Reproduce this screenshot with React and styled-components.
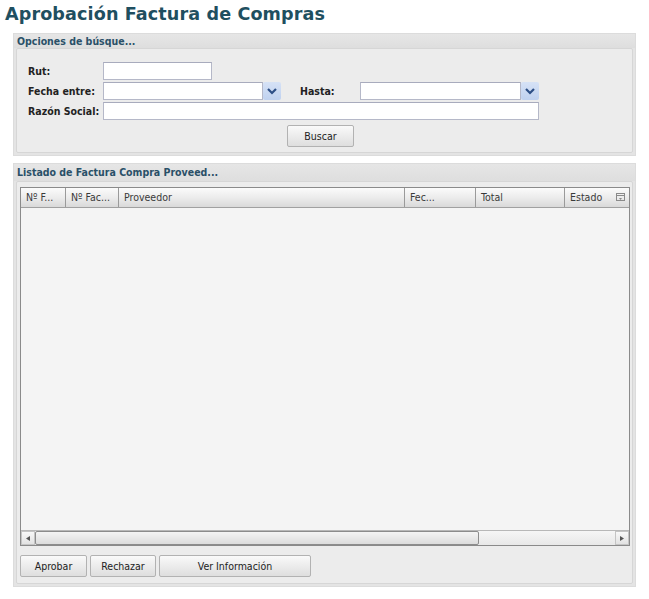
import React from "react";
import styled, { createGlobalStyle } from "styled-components";

const Global = createGlobalStyle`
  html, body { margin: 0; padding: 0; background: #fff; }
  body { font-family: Tahoma, "DejaVu Sans Condensed", "DejaVu Sans", sans-serif; font-size: 11px; color: #222; }
`;

const Page = styled.div`
  width: 649px;
  padding: 4px 0 0 0;
  box-sizing: border-box;
`;

const Title = styled.h1`
  margin: 0 0 9px 5px;
  font-family: "DejaVu Sans", Verdana, sans-serif;
  font-weight: bold;
  font-size: 17.6px;
  line-height: 20px;
  color: #1f4f60;
  letter-spacing: 0.1px;
`;

const Panel = styled.section`
  margin: 0 13px ${(p) => p.$gap || 0}px 13px;
  width: 623px;
  background: #e4e4e4;
  border: 1px solid #dcdcdc;
  box-sizing: border-box;
  height: ${(p) => p.$height}px;
  display: flex;
  flex-direction: column;
`;

const PanelHeader = styled.div`
  height: ${(p) => p.$h || 14}px;
  line-height: ${(p) => p.$h || 14}px;
  padding-left: 3px;
  font-weight: bold;
  font-size: 10.5px;
  color: #2a5068;
  background: linear-gradient(#e6e6e6, #dedede);
`;

const PanelBody = styled.div`
  flex: 1;
  margin: 0 2px 2px 2px;
  background: #ececec;
  border: 1px solid #d6d6d6;
  border-radius: 2px;
  padding: ${(p) => p.$pad};
  display: flex;
  flex-direction: column;
`;

const Form = styled.div`
  display: grid;
  grid-template-columns: 75px auto;
  row-gap: 2px;
  padding-left: 11px;
`;

const Label = styled.label`
  font-weight: bold;
  font-size: 10.5px;
  line-height: 18px;
  color: #222;
`;

const FieldRow = styled.div`
  display: flex;
  align-items: center;
`;

const Input = styled.input`
  box-sizing: border-box;
  width: ${(p) => p.$w}px;
  height: 18px;
  border: 1px solid #b5b8c8;
  border-top-color: #a8abbd;
  background: #fff;
  padding: 0 3px;
  margin: 0;
  font-size: 11px;
  outline: none;
`;

const Trigger = styled.span`
  width: 18px;
  height: 18px;
  box-sizing: border-box;
  background: linear-gradient(#d6e2f6, #bfd1ef);
  border-radius: 2px;
  display: flex;
  align-items: center;
  justify-content: center;
`;

const InlineLabel = styled(Label)`
  margin-left: 19px;
  width: 60px;
`;

const Button = styled.button`
  box-sizing: border-box;
  width: ${(p) => p.$w}px;
  height: 22px;
  margin: 0;
  padding: 0;
  border: 1px solid #b2b2b2;
  border-radius: 2px;
  background: linear-gradient(#fafafa, #e9e9e9 60%, #dedede);
  font-family: Tahoma, "DejaVu Sans Condensed", "DejaVu Sans", sans-serif;
  font-size: 10.5px;
  color: #222;
`;

const SearchBar = styled.div`
  display: flex;
  justify-content: center;
  margin-top: 5px;
  padding-right: 8px;
`;

const Grid = styled.div`
  width: 610px;
  height: 359px;
  box-sizing: border-box;
  border: 1px solid #8a8a8a;
  background: #f2f2f2;
  display: flex;
  flex-direction: column;
`;

const HeaderRow = styled.div`
  display: flex;
  height: 19px;
  border-bottom: 1px solid #a0a0a0;
  background: linear-gradient(#fbfbfb, #ececec 50%, #d9d9d9);
`;

const HeaderCell = styled.div`
  width: ${(p) => p.$w}px;
  box-sizing: border-box;
  border-right: 1px solid #9a9a9a;
  padding-left: 5px;
  line-height: 19px;
  font-size: 10.5px;
  color: #3a3a3a;
  display: flex;
  justify-content: space-between;
  align-items: center;
  padding-right: 4px;
  &:last-child { border-right: none; }
`;

const GridBody = styled.div`
  flex: 1;
  background: #f4f4f4;
`;

const Scrollbar = styled.div`
  display: flex;
  height: 14px;
  border-top: 1px solid #b8b8b8;
  background: #ececec;
`;

const ScrollBtn = styled.div`
  width: 14px;
  box-sizing: border-box;
  border: 1px solid #c4c4c4;
  background: linear-gradient(#f8f8f8, #e2e2e2);
  display: flex;
  align-items: center;
  justify-content: center;
`;

const Thumb = styled.div`
  width: 444px;
  box-sizing: border-box;
  border: 1px solid #8c8c8c;
  border-radius: 2px;
  background: linear-gradient(#f4f4f4, #dcdcdc);
`;

const Track = styled.div`
  flex: 1;
  background: linear-gradient(#f6f6f6, #e8e8e8);
`;

const Toolbar = styled.div`
  display: flex;
  gap: 3px;
  margin-top: 9px;
`;

const Arrow = ({ dir }) => (
  <svg width="4" height="5" viewBox="0 0 4 5">
    <path d={dir === "left" ? "M4 0 L0 2.5 L4 5 Z" : "M0 0 L4 2.5 L0 5 Z"} fill="#555" />
  </svg>
);

const Chevron = () => (
  <svg width="10" height="7" viewBox="0 0 10 7">
    <path d="M1 1 L5 5 L9 1" fill="none" stroke="#2d4f86" strokeWidth="2.2" />
  </svg>
);

const MenuIcon = () => (
  <svg width="9" height="9" viewBox="0 0 9 9">
    <rect x="0.5" y="0.5" width="8" height="7" fill="none" stroke="#8a8a8a" />
    <line x1="0.5" y1="2.5" x2="8.5" y2="2.5" stroke="#8a8a8a" />
    <path d="M3 5 L6 5 L4.5 7 Z" fill="#8a8a8a" />
  </svg>
);

const columns = [
  { t: "Nº F...", w: 45 },
  { t: "Nº Fac...", w: 53 },
  { t: "Proveedor", w: 286 },
  { t: "Fec...", w: 71 },
  { t: "Total", w: 89 },
  { t: "Estado", w: 64, menu: true },
];

export default function App() {
  return (
    <Page>
      <Global />
      <Title>Aprobación Factura de Compras</Title>

      <Panel $height={123} $gap={7}>
        <PanelHeader>Opciones de búsque...</PanelHeader>
        <PanelBody $pad="13px 0 0 0">
          <Form>
            <Label>Rut:</Label>
            <FieldRow>
              <Input $w={109} />
            </FieldRow>
            <Label>Fecha entre:</Label>
            <FieldRow>
              <Input $w={160} />
              <Trigger><Chevron /></Trigger>
              <InlineLabel>Hasta:</InlineLabel>
              <Input $w={161} />
              <Trigger><Chevron /></Trigger>
            </FieldRow>
            <Label>Razón Social:</Label>
            <FieldRow>
              <Input $w={436} />
            </FieldRow>
          </Form>
          <SearchBar>
            <Button $w={67}>Buscar</Button>
          </SearchBar>
        </PanelBody>
      </Panel>

      <Panel $height={424}>
        <PanelHeader $h={17}>Listado de Factura Compra Proveed...</PanelHeader>
        <PanelBody $pad="5px 0 0 3px">
          <Grid>
            <HeaderRow>
              {columns.map((c) => (
                <HeaderCell key={c.t} $w={c.w}>
                  <span>{c.t}</span>
                  {c.menu && <MenuIcon />}
                </HeaderCell>
              ))}
            </HeaderRow>
            <GridBody />
            <Scrollbar>
              <ScrollBtn><Arrow dir="left" /></ScrollBtn>
              <Thumb />
              <Track />
              <ScrollBtn><Arrow dir="right" /></ScrollBtn>
            </Scrollbar>
          </Grid>
          <Toolbar>
            <Button $w={67}>Aprobar</Button>
            <Button $w={66}>Rechazar</Button>
            <Button $w={152}>Ver Información</Button>
          </Toolbar>
        </PanelBody>
      </Panel>
    </Page>
  );
}
